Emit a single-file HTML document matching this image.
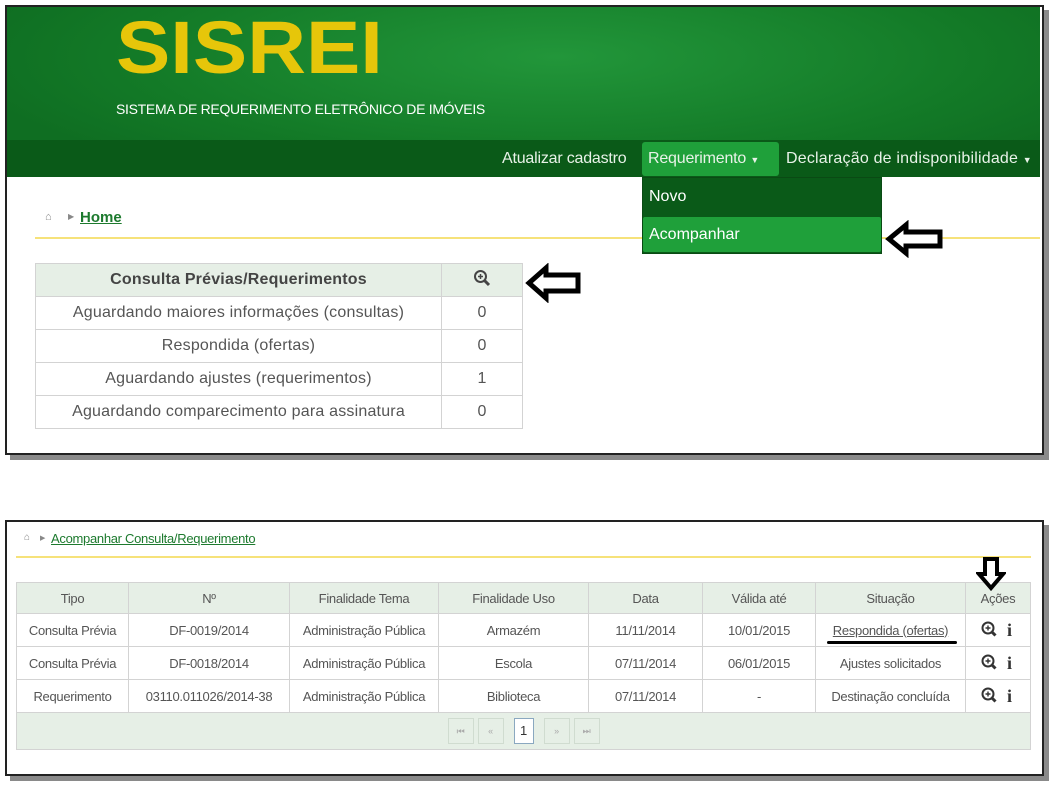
<!DOCTYPE html>
<html><head><meta charset="utf-8">
<style>
*{margin:0;padding:0;box-sizing:border-box}
body{width:1050px;height:786px;background:#fff;position:relative;overflow:hidden;font-family:"Liberation Sans",sans-serif;color:#555}
.frame{position:absolute;border:2px solid #222;background:#fff;box-shadow:5px 5px 0 #8a8a8a}
.abs{position:absolute}
table{border-collapse:collapse;position:absolute}
td,th{text-align:center;border:1px solid #d3d3d3;font-weight:normal}
a{color:#1d7a2e}
</style></head><body>

<div class="frame" style="left:5px;top:5px;width:1039px;height:450px"></div>
<div class="abs" style="left:7px;top:7px;width:1033px;height:134px;background:radial-gradient(ellipse 600px 140px at 550px 50px,#22963a,#137a27 70%,#0f6e22)"></div>
<div class="abs" style="left:7px;top:140px;width:1033px;height:37px;background:#0a5a18"></div>
<div class="abs" style="left:116px;top:11px;font-size:74px;font-weight:bold;color:#e6c60a;line-height:74px;transform:scaleX(1.1);transform-origin:0 0">SISREI</div>
<div class="abs" style="left:116px;top:101px;font-size:14px;color:#fff;letter-spacing:-0.3px">SISTEMA DE REQUERIMENTO ELETRÔNICO DE IMÓVEIS</div>
<div class="abs" style="left:35px;top:237px;width:1005px;height:2px;background:#f6e27a"></div>
<div class="abs" style="left:502px;top:150px;font-size:16px;color:#e8f2e8;letter-spacing:-0.2px">Atualizar cadastro</div>
<div class="abs" style="left:642px;top:142px;width:137px;height:34px;background:#1fa03a;border-radius:3px"></div>
<div class="abs" style="left:648px;top:150px;font-size:16px;color:#e8f2e8;letter-spacing:-0.2px">Requerimento <span style="font-size:9px">▼</span></div>
<div class="abs" style="left:786px;top:150px;font-size:16px;color:#e8f2e8;letter-spacing:0.2px">Declaração de indisponibilidade <span style="font-size:9px">▼</span></div>
<div class="abs" style="left:642px;top:177px;width:240px;height:77px;background:#0a5a18;border:1px solid #0a4a14"></div>
<div class="abs" style="left:649px;top:188px;font-size:16px;color:#fff">Novo</div>
<div class="abs" style="left:643px;top:217px;width:238px;height:35px;background:#1fa03a;border-radius:2px"></div>
<div class="abs" style="left:649px;top:226px;font-size:16px;color:#fff">Acompanhar</div>
<svg class="abs" style="left:884px;top:220px" width="62" height="38"><path d="M5 19 L22 5 L22 12 L56 12 L56 26 L22 26 L22 33 Z" fill="#fff" stroke="#000" stroke-width="5" stroke-linejoin="miter"/></svg>

<div class="abs" style="left:45px;top:211px;font-size:11px;color:#888">⌂</div>
<div class="abs" style="left:68px;top:212px;font-size:8px;color:#888">▶</div>
<div class="abs" style="left:80px;top:209px;font-size:15px;font-weight:bold"><a href="#">Home</a></div>

<table style="left:35px;top:263px;width:488px;font-size:16px;letter-spacing:0.2px">
<tr style="height:33px;background:#e6efe6"><th style="width:406px;font-weight:bold;color:#444">Consulta Prévias/Requerimentos</th><th style="color:#555">
<svg width="18" height="18" viewBox="0 0 18 18"><circle cx="7.5" cy="7.5" r="5.5" fill="none" stroke="#444" stroke-width="2"/><path d="M11.5 11.5 L16 16" stroke="#444" stroke-width="3"/><path d="M5 7.5h5M7.5 5v5" stroke="#444" stroke-width="1.5"/></svg></th></tr>
<tr style="height:33px"><td>Aguardando maiores informações (consultas)</td><td>0</td></tr>
<tr style="height:33px"><td>Respondida (ofertas)</td><td>0</td></tr>
<tr style="height:33px"><td>Aguardando ajustes (requerimentos)</td><td>1</td></tr>
<tr style="height:33px"><td>Aguardando comparecimento para assinatura</td><td>0</td></tr>
</table>
<svg class="abs" style="left:524px;top:263px" width="60" height="40"><path d="M5 20 L22 5 L22 12 L54 12 L54 28 L22 28 L22 35 Z" fill="#fff" stroke="#000" stroke-width="5"/></svg>

<div class="frame" style="left:5px;top:520px;width:1039px;height:256px"></div>
<div class="abs" style="left:24px;top:532px;font-size:10px;color:#888">⌂</div>
<div class="abs" style="left:40px;top:534px;font-size:7px;color:#888">▶</div>
<div class="abs" style="left:51px;top:531px;font-size:13px;letter-spacing:-0.3px"><a href="#">Acompanhar Consulta/Requerimento</a></div>
<div class="abs" style="left:16px;top:556px;width:1015px;height:2px;background:#f6e27a"></div>

<table style="left:16px;top:582px;width:1015px;font-size:13px;letter-spacing:-0.3px">
<tr style="height:31px;background:#e6efe6"><th style="width:112px">Tipo</th><th style="width:161px">Nº</th><th style="width:149px">Finalidade Tema</th><th style="width:150px">Finalidade Uso</th><th style="width:114px">Data</th><th style="width:113px">Válida até</th><th style="width:150px">Situação</th><th>Ações</th></tr>
<tr style="height:33px"><td>Consulta Prévia</td><td>DF-0019/2014</td><td>Administração Pública</td><td>Armazém</td><td>11/11/2014</td><td>10/01/2015</td><td style="position:relative"><u>Respondida (ofertas)</u><div style="position:absolute;left:11px;bottom:2px;width:130px;height:3px;background:#000;border-radius:2px"></div></td><td class="ac"></td></tr>
<tr style="height:33px"><td>Consulta Prévia</td><td>DF-0018/2014</td><td>Administração Pública</td><td>Escola</td><td>07/11/2014</td><td>06/01/2015</td><td>Ajustes solicitados</td><td class="ac"></td></tr>
<tr style="height:33px"><td>Requerimento</td><td>03110.011026/2014-38</td><td>Administração Pública</td><td>Biblioteca</td><td>07/11/2014</td><td>-</td><td>Destinação concluída</td><td class="ac"></td></tr>
<tr style="height:37px;background:#e6efe6"><td colspan="8" style="border-color:#d3d3d3">
<span style="display:inline-flex;gap:4px;vertical-align:middle;font-size:9px;color:#aaa">
<span style="width:26px;height:26px;border:1px solid #d0dcd0;line-height:24px">⏮</span>
<span style="width:26px;height:26px;border:1px solid #d0dcd0;line-height:24px">«</span>
<span style="width:20px;height:26px;border:1px solid #8aa8c0;background:#fff;line-height:24px;font-size:13px;color:#333;margin:0 6px">1</span>
<span style="width:26px;height:26px;border:1px solid #d0dcd0;line-height:24px">»</span>
<span style="width:26px;height:26px;border:1px solid #d0dcd0;line-height:24px">⏭</span>
</span></td></tr>
</table>
<svg class="abs" style="left:976px;top:556px" width="30" height="36"><path d="M15 32 L3 18 L9 18 L9 3 L21 3 L21 18 L27 18 Z" fill="#fff" stroke="#000" stroke-width="4"/></svg>
<div class="abs" style="left:980px;top:620px;width:40px;height:90px">
<svg width="40" height="90">
<g id="r"><circle cx="8" cy="8" r="5.5" fill="none" stroke="#333" stroke-width="2"/><path d="M12 12 L15.5 15.5" stroke="#333" stroke-width="3"/><path d="M5.5 8h5M8 5.5v5" stroke="#333" stroke-width="1.4"/><text x="27" y="16" font-family="Liberation Serif" font-weight="bold" font-size="18" fill="#333">i</text></g>
<use href="#r" y="33"/><use href="#r" y="66"/>
</svg></div>
</body></html>
